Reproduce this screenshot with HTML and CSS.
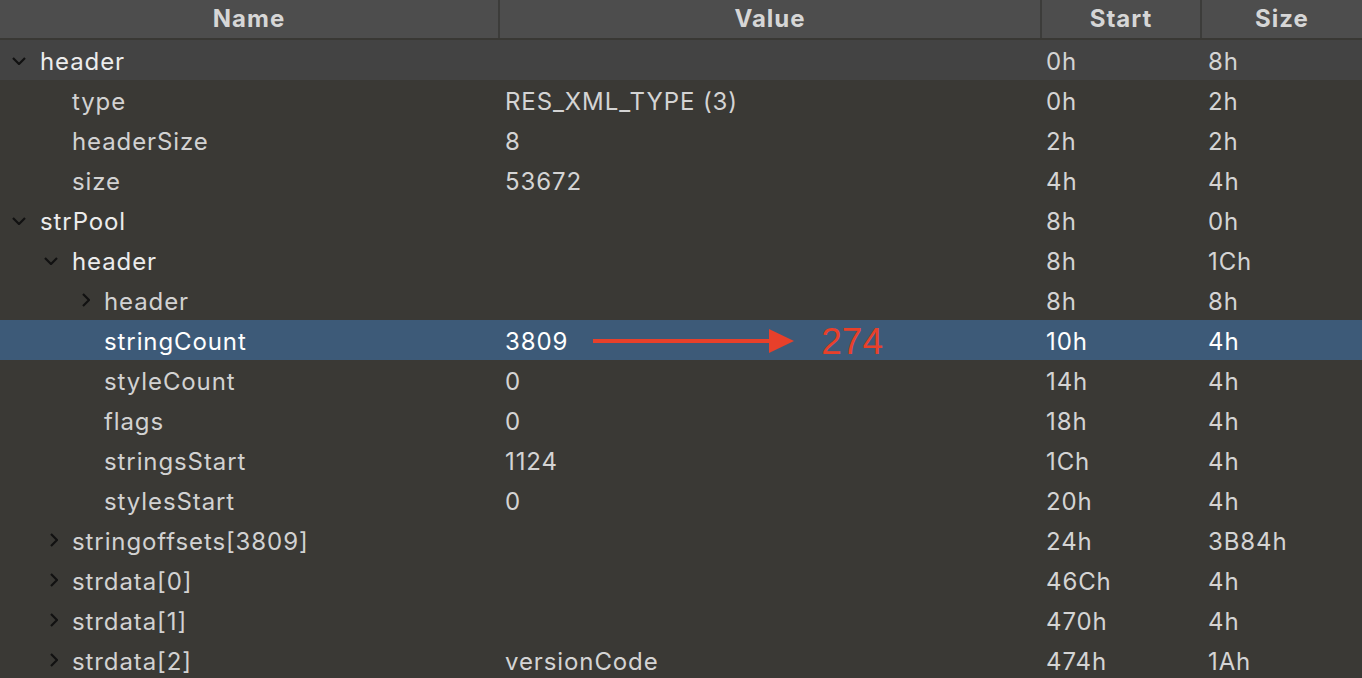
FILE: index.html
```html
<!DOCTYPE html>
<html>
<head>
<meta charset="utf-8">
<link rel="stylesheet" href="styles.css">
</head>
<body>
<div class="table">
  <div class="head">
    <div class="hcell">Name</div>
    <div class="hcell">Value</div>
    <div class="hcell">Start</div>
    <div class="hcell last">Size</div>
  </div>

  <div class="row first">
    <div class="name l0"><svg class="chev" viewBox="0 0 14 8"><path d="M1 1 L7 7 L13 1"/></svg><span class="top">header</span></div>
    <div class="val"></div><div class="start">0h</div><div class="size">8h</div>
  </div>
  <div class="row">
    <div class="name l1"><span>type</span></div>
    <div class="val">RES_XML_TYPE (3)</div><div class="start">0h</div><div class="size">2h</div>
  </div>
  <div class="row">
    <div class="name l1"><span>headerSize</span></div>
    <div class="val">8</div><div class="start">2h</div><div class="size">2h</div>
  </div>
  <div class="row">
    <div class="name l1"><span>size</span></div>
    <div class="val">53672</div><div class="start">4h</div><div class="size">4h</div>
  </div>
  <div class="row">
    <div class="name l0"><svg class="chev" viewBox="0 0 14 8"><path d="M1 1 L7 7 L13 1"/></svg><span class="top">strPool</span></div>
    <div class="val"></div><div class="start">8h</div><div class="size">0h</div>
  </div>
  <div class="row">
    <div class="name l1"><svg class="chev" viewBox="0 0 14 8"><path d="M1 1 L7 7 L13 1"/></svg><span class="top">header</span></div>
    <div class="val"></div><div class="start">8h</div><div class="size">1Ch</div>
  </div>
  <div class="row">
    <div class="name l2"><svg class="chevr" viewBox="0 0 8 14"><path d="M1 1 L7 7 L1 13"/></svg><span>header</span></div>
    <div class="val"></div><div class="start">8h</div><div class="size">8h</div>
  </div>
  <div class="row sel">
    <div class="name l2"><span>stringCount</span></div>
    <div class="val"><span>3809</span><span class="arrow"><span class="shaft"></span><span class="head-tri"></span></span><span class="newval">274</span></div>
    <div class="start">10h</div><div class="size">4h</div>
  </div>
  <div class="row">
    <div class="name l2"><span>styleCount</span></div>
    <div class="val">0</div><div class="start">14h</div><div class="size">4h</div>
  </div>
  <div class="row">
    <div class="name l2"><span>flags</span></div>
    <div class="val">0</div><div class="start">18h</div><div class="size">4h</div>
  </div>
  <div class="row">
    <div class="name l2"><span>stringsStart</span></div>
    <div class="val">1124</div><div class="start">1Ch</div><div class="size">4h</div>
  </div>
  <div class="row">
    <div class="name l2"><span>stylesStart</span></div>
    <div class="val">0</div><div class="start">20h</div><div class="size">4h</div>
  </div>
  <div class="row">
    <div class="name l1"><svg class="chevr" viewBox="0 0 8 14"><path d="M1 1 L7 7 L1 13"/></svg><span>stringoffsets[3809]</span></div>
    <div class="val"></div><div class="start">24h</div><div class="size">3B84h</div>
  </div>
  <div class="row">
    <div class="name l1"><svg class="chevr" viewBox="0 0 8 14"><path d="M1 1 L7 7 L1 13"/></svg><span>strdata[0]</span></div>
    <div class="val"></div><div class="start">46Ch</div><div class="size">4h</div>
  </div>
  <div class="row">
    <div class="name l1"><svg class="chevr" viewBox="0 0 8 14"><path d="M1 1 L7 7 L1 13"/></svg><span>strdata[1]</span></div>
    <div class="val"></div><div class="start">470h</div><div class="size">4h</div>
  </div>
  <div class="row">
    <div class="name l1"><svg class="chevr" viewBox="0 0 8 14"><path d="M1 1 L7 7 L1 13"/></svg><span>strdata[2]</span></div>
    <div class="val">versionCode</div><div class="start">474h</div><div class="size">1Ah</div>
  </div>
</div>
</body>
</html>
```

FILE: styles.css
```css
html, body {
  margin: 0;
  padding: 0;
  background: #3a3935;
  overflow: hidden;
}
body {
  width: 1362px;
  height: 678px;
  font-family: Inter, "Liberation Sans", sans-serif;
  font-size: 24px;
  letter-spacing: 0.9px;
  color: #d4d4d4;
}
.table {
  display: flex;
  flex-direction: column;
}
.head {
  display: grid;
  grid-template-columns: 500px 542px 160px 160px;
  height: 38px;
  background: #4d4d4d;
  border-bottom: 2px solid #393834;
}
.hcell {
  display: flex;
  align-items: center;
  justify-content: center;
  font-weight: 700;
  color: #d6d6d6;
  font-size: 24px;
  letter-spacing: 1px;
  border-right: 2px solid #3c3c3a;
  padding-bottom: 2px;
}
.hcell.last { border-right: none; }
.row {
  display: grid;
  grid-template-columns: 500px 542px 160px 160px;
  height: 40px;
  align-items: center;
  padding-top: 2px;
  box-sizing: border-box;
}
.row.first { background: #434343; }
.row.sel { background: #3d5a78; color: #ffffff; }
.row.sel .name span { color: #ffffff; }
.name {
  display: flex;
  align-items: center;
  position: relative;
  height: 38px;
}
.name span { color: #d2d2d2; }
.name span.top { color: #ececec; }
.l0 { padding-left: 40px; }
.l1 { padding-left: 72px; }
.l2 { padding-left: 104px; }
.chev {
  position: absolute;
  width: 14px;
  height: 8px;
  top: 15px;
  fill: none;
  stroke: #111;
  stroke-width: 2.2;
}
.l0 .chev { left: 12px; }
.l1 .chev { left: 44px; }
.chevr {
  position: absolute;
  width: 8px;
  height: 14px;
  top: 11px;
  fill: none;
  stroke: #111;
  stroke-width: 2.2;
}
.l1 .chevr { left: 50px; }
.l2 .chevr { left: 82px; }
.val {
  padding-left: 5px;
  display: flex;
  align-items: center;
}
.start { padding-left: 4px; }
.size { padding-left: 6px; }
.arrow {
  display: flex;
  align-items: center;
  margin-left: 25px;
}
.shaft {
  width: 176px;
  height: 4px;
  background: #e8402a;
}
.head-tri {
  width: 0;
  height: 0;
  border-top: 12px solid transparent;
  border-bottom: 12px solid transparent;
  border-left: 25px solid #e8402a;
}
.newval {
  margin-left: 27px;
  color: #e8402a;
  font-size: 37px;
  letter-spacing: 0;
  font-family: "Liberation Sans", sans-serif;
  line-height: 1;
}
```
